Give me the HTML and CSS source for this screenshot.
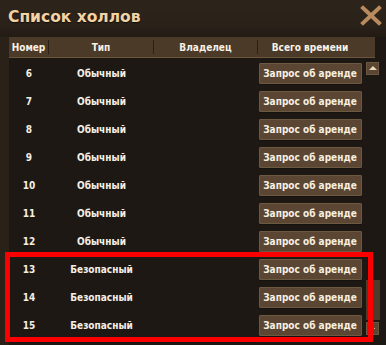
FILE: index.html
```html
<!DOCTYPE html>
<html lang="ru">
<head>
    <meta charset="UTF-8">
    <meta name="viewport" content="width=device-width, initial-scale=1.0">
    <title>Список холлов</title>
    <link rel="stylesheet" href="styles.css">
</head>
<body>
    <div class="window">
        <div class="titlebar">
            <div class="title">Список холлов</div>
            <div class="close">
                <svg width="22" height="21" viewBox="0 0 22 21">
                    <path d="M3 3 L19 18 M19 3 L3 18" stroke="#b98a5e" stroke-width="4" stroke-linecap="square"/>
                </svg>
            </div>
        </div>

        <div class="list">
            <div class="head">
                <div class="col num">Номер</div>
                <div class="col type">Тип</div>
                <div class="col owner">Владелец</div>
                <div class="col time">Всего времени</div>
            </div>

            <div class="body">
                <div class="rows">
                    <div class="row"><div class="num">6</div><div class="type">Обычный</div><div class="owner"></div><div class="time"><button class="btn">Запрос об аренде</button></div></div>
                    <div class="row"><div class="num">7</div><div class="type">Обычный</div><div class="owner"></div><div class="time"><button class="btn">Запрос об аренде</button></div></div>
                    <div class="row"><div class="num">8</div><div class="type">Обычный</div><div class="owner"></div><div class="time"><button class="btn">Запрос об аренде</button></div></div>
                    <div class="row"><div class="num">9</div><div class="type">Обычный</div><div class="owner"></div><div class="time"><button class="btn">Запрос об аренде</button></div></div>
                    <div class="row"><div class="num">10</div><div class="type">Обычный</div><div class="owner"></div><div class="time"><button class="btn">Запрос об аренде</button></div></div>
                    <div class="row"><div class="num">11</div><div class="type">Обычный</div><div class="owner"></div><div class="time"><button class="btn">Запрос об аренде</button></div></div>
                    <div class="row"><div class="num">12</div><div class="type">Обычный</div><div class="owner"></div><div class="time"><button class="btn">Запрос об аренде</button></div></div>
                    <div class="row"><div class="num">13</div><div class="type">Безопасный</div><div class="owner"></div><div class="time"><button class="btn">Запрос об аренде</button></div></div>
                    <div class="row"><div class="num">14</div><div class="type">Безопасный</div><div class="owner"></div><div class="time"><button class="btn">Запрос об аренде</button></div></div>
                    <div class="row"><div class="num">15</div><div class="type">Безопасный</div><div class="owner"></div><div class="time"><button class="btn">Запрос об аренде</button></div></div>
                </div>

                <div class="scrollbar">
                    <div class="arrow up"></div>
                    <div class="thumb"></div>
                    <div class="arrow down"><span></span><span></span></div>
                </div>
            </div>
        </div>

        <div class="highlight"></div>
    </div>
</body>
</html>
```

FILE: styles.css
```css
* {
    margin: 0;
    padding: 0;
    box-sizing: border-box;
}

body {
    background: #1d1813;
    font-family: 'DejaVu Sans Condensed', 'DejaVu Sans', sans-serif;
    font-weight: bold;
    color: #f4efe6;
}

.window {
    position: relative;
    width: 386px;
    height: 345px;
    background: #2a2119;
    overflow: hidden;
}

.titlebar {
    height: 37px;
    display: flex;
    justify-content: space-between;
    align-items: flex-start;
    padding: 0 4px 0 8px;
    background: linear-gradient(180deg, #2d241b 0%, #2a2119 70%, #221b14 100%);
}

.title {
    font-family: 'DejaVu Sans', sans-serif;
    font-size: 15.5px;
    color: #f3d3a4;
    margin-top: 8px;
    text-shadow: 0 1px 1px rgba(0, 0, 0, 0.6);
}

.close {
    margin-top: 5px;
}

.list {
    margin-left: 9px;
    background: #1d1813;
    height: 308px;
}

.head {
    display: flex;
    width: 366px;
    height: 21px;
    background: #4b3a28;
    border-bottom: 1px solid #6a553d;
    font-size: 10px;
    color: #f7f1e6;
}

.head .col {
    display: flex;
    align-items: center;
    justify-content: center;
    border-right: 1px solid #2a2016;
    margin: 3px 0;
}

.head .time {
    border-right: none;
}

.num {
    width: 40px;
    text-align: center;
}

.type {
    width: 105px;
    text-align: center;
}

.owner {
    width: 104px;
}

.time {
    width: 104px;
    text-align: center;
}

.body {
    display: flex;
}

.rows {
    padding-top: 1px;
}

.row {
    display: flex;
    align-items: center;
    height: 28px;
    font-size: 10px;
}

.btn {
    width: 103px;
    height: 21px;
    padding: 0;
    white-space: nowrap;
    font-family: 'DejaVu Sans Condensed', 'DejaVu Sans', sans-serif;
    font-weight: bold;
    font-size: 10px;
    color: #f6efe2;
    background: #5a4632;
    border: 1px solid #6d5842;
    border-radius: 1px;
    box-shadow: 0 1px 0 #15110d;
}

.scrollbar {
    position: relative;
    width: 14px;
    margin-left: 4px;
    height: 286px;
}

.arrow {
    width: 13px;
    height: 13px;
    background: #5a4632;
    border: 1px solid #6b563f;
}

.arrow.up {
    margin-top: 4px;
    position: relative;
}

.arrow.up::after {
    content: "";
    position: absolute;
    left: 2px;
    top: 3px;
    border-left: 4px solid transparent;
    border-right: 4px solid transparent;
    border-bottom: 4px solid #ead9b8;
}

.thumb {
    position: absolute;
    left: 0;
    top: 222px;
    width: 14px;
    height: 40px;
    background: #4d3c2b;
}

.arrow.down {
    position: absolute;
    left: 0;
    top: 264px;
    display: flex;
    justify-content: center;
    align-items: center;
    gap: 3px;
}

.arrow.down span {
    width: 1px;
    height: 1px;
    background: #cdb89a;
}

.highlight {
    position: absolute;
    left: 5px;
    top: 252px;
    width: 368px;
    height: 90px;
    border: 5px solid #fb0000;
}
```
